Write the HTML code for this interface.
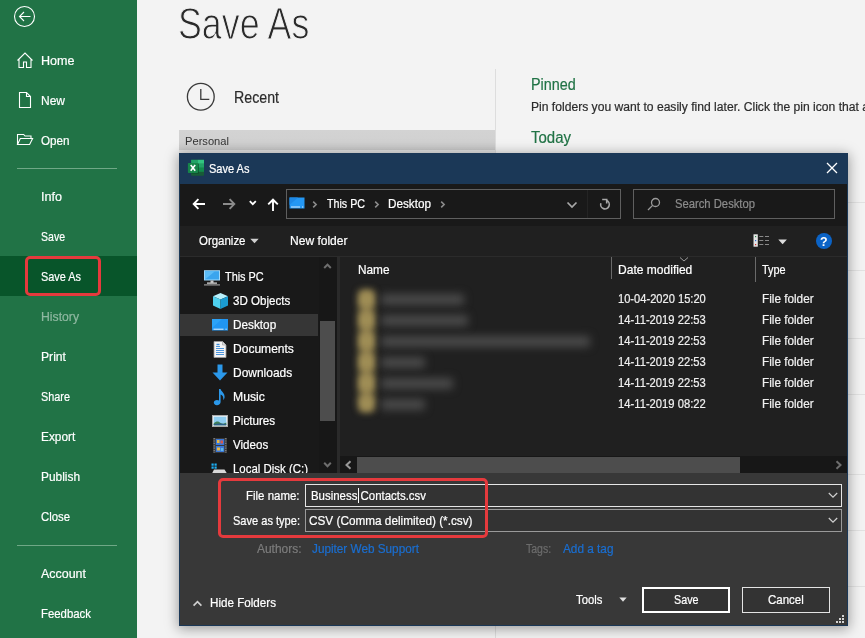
<!DOCTYPE html>
<html><head><meta charset="utf-8"><title>Save As</title>
<style>
*{box-sizing:border-box;margin:0;padding:0}
html,body{width:865px;height:638px;overflow:hidden;background:#f3f3f3;font-family:"Liberation Sans",sans-serif;}
.a{position:absolute}
.t{position:absolute;white-space:nowrap;transform-origin:0 50%}
#side{position:absolute;left:0;top:0;width:137px;height:638px;background:#217346;color:#fff}
.hr{position:absolute;left:17px;width:100px;height:1px;background:#6fa886}
.redbox{position:absolute;border:3px solid #e53a3d;border-radius:5px}
#dlg{position:absolute;left:179px;top:153px;width:669px;height:473px;background:#1b3857;color:#fff;box-shadow:0 2px 12px 1px rgba(0,0,0,.36)}
.bl{position:absolute;filter:blur(3px);border-radius:3px}
</style></head><body>

<div class="a" style="left:179px;top:130px;width:316px;height:23px;background:linear-gradient(#d3d3d3 0,#d1d1d1 50%,#c9c9c9 86.9%,#e3e3e3 87%,#e3e3e3 100%)"></div>
<div class="a" style="left:495px;top:69px;width:1px;height:569px;background:#dddddd"></div>
<div class="a" style="left:531px;top:202px;width:334px;height:1px;background:#e2e2e2"></div>
<div class="a" style="left:531px;top:270px;width:334px;height:1px;background:#e2e2e2"></div>
<div class="a" style="left:531px;top:338px;width:334px;height:1px;background:#e2e2e2"></div>
<div class="a" style="left:531px;top:394px;width:334px;height:1px;background:#e2e2e2"></div>
<div class="a" style="left:531px;top:474px;width:334px;height:1px;background:#e2e2e2"></div>
<div class="a" style="left:531px;top:530px;width:334px;height:1px;background:#e2e2e2"></div>
<div class="a" style="left:531px;top:586px;width:334px;height:1px;background:#e2e2e2"></div>
<div class="t" style="left:177.6px;top:-1.64px;font-size:43.5px;line-height:52.2px;color:#2a2a2a;transform:scaleX(0.8226);-webkit-text-stroke:1.05px #f3f3f3;">Save As</div>
<svg class="a" style="left:185px;top:81px" width="32" height="32" viewBox="0 0 32 32"><circle cx="15.800" cy="15.800" r="13.400" fill="none" stroke="#3a3a3a" stroke-width="1.300"/><path d="M15.800 8.100v10.200h8.500" fill="none" stroke="#3a3a3a" stroke-width="1.300"/></svg>
<div class="t" style="left:234.0px;top:87.88px;font-size:16.5px;line-height:19.8px;color:#2b2b2b;transform:scaleX(0.8607);-webkit-text-stroke:0.2px #2b2b2b;">Recent</div>
<div class="t" style="left:185.0px;top:133.86px;font-size:11.8px;line-height:14.16px;color:#333;transform:scaleX(0.9450);">Personal</div>
<div class="t" style="left:531.0px;top:75.74px;font-size:15.8px;line-height:18.96px;color:#217346;transform:scaleX(0.9105);-webkit-text-stroke:0.2px #217346;">Pinned</div>
<div class="t" style="left:531.0px;top:99.53px;font-size:12.3px;line-height:14.76px;color:#2b2b2b;transform:scaleX(0.9849);-webkit-text-stroke:0.2px #2b2b2b;">Pin folders you want to easily find later. Click the pin icon that appears</div>
<div class="t" style="left:531.0px;top:129.14px;font-size:15.8px;line-height:18.96px;color:#217346;transform:scaleX(0.9489);-webkit-text-stroke:0.2px #217346;">Today</div>
<div id="side">
<svg class="a" style="left:12px;top:4px" width="25" height="25" viewBox="0 0 25 25"><circle cx="12.5" cy="12.5" r="10" fill="none" stroke="#fff" stroke-width="1.1"/><path d="M18.5 12.5h-11M12 8l-4.5 4.5L12 17" fill="none" stroke="#fff" stroke-width="1.1"/></svg>
<svg class="a" style="left:16px;top:51px" width="18" height="18" viewBox="0 0 18 18"><path d="M1.500 9.500L9 2l7.500 7.500M3 8.500V16.500h4.500v-5.500h3v5.500H15V8.500" fill="none" stroke="#fff" stroke-width="1.1"/></svg>
<svg class="a" style="left:17px;top:91px" width="16" height="18" viewBox="0 0 16 18"><path d="M2.500 1.500h7l4 4v11h-11zM9.500 1.500v4h4" fill="none" stroke="#fff" stroke-width="1.1"/></svg>
<svg class="a" style="left:15px;top:131px" width="20" height="16" viewBox="0 0 20 16"><path d="M2.500 13.500V3.500h6.200l1.300 1.500h6v2.500M2.500 13.500l2.800-6H17.600l-3 6z" fill="none" stroke="#fff" stroke-width="1.1"/></svg>
<div class="hr" style="top:168px"></div>
<div class="a" style="left:0;top:256px;width:137px;height:40px;background:#08552a"></div>
<div class="redbox" style="left:24.500px;top:255.500px;width:76.500px;height:40.500px"></div>
<div class="hr" style="top:545px"></div>
<div class="t" style="left:41.0px;top:53.40px;font-size:12.8px;line-height:15.36px;color:#fff;transform:scaleX(0.9812);-webkit-text-stroke:0.2px #fff;">Home</div>
<div class="t" style="left:41.0px;top:93.40px;font-size:12.8px;line-height:15.36px;color:#fff;transform:scaleX(0.9372);-webkit-text-stroke:0.2px #fff;">New</div>
<div class="t" style="left:41.0px;top:133.40px;font-size:12.8px;line-height:15.36px;color:#fff;transform:scaleX(0.9134);-webkit-text-stroke:0.2px #fff;">Open</div>
<div class="t" style="left:41.0px;top:189.40px;font-size:12.8px;line-height:15.36px;color:#fff;transform:scaleX(0.9832);-webkit-text-stroke:0.2px #fff;">Info</div>
<div class="t" style="left:41.0px;top:229.40px;font-size:12.8px;line-height:15.36px;color:#fff;transform:scaleX(0.8227);-webkit-text-stroke:0.2px #fff;">Save</div>
<div class="t" style="left:41.0px;top:269.40px;font-size:12.8px;line-height:15.36px;color:#fff;transform:scaleX(0.8519);-webkit-text-stroke:0.2px #fff;">Save As</div>
<div class="t" style="left:41.0px;top:309.40px;font-size:12.8px;line-height:15.36px;color:#8fb8a1;transform:scaleX(0.9541);-webkit-text-stroke:0.2px #8fb8a1;">History</div>
<div class="t" style="left:41.0px;top:349.40px;font-size:12.8px;line-height:15.36px;color:#fff;transform:scaleX(0.9501);-webkit-text-stroke:0.2px #fff;">Print</div>
<div class="t" style="left:41.0px;top:389.40px;font-size:12.8px;line-height:15.36px;color:#fff;transform:scaleX(0.8490);-webkit-text-stroke:0.2px #fff;">Share</div>
<div class="t" style="left:41.0px;top:429.40px;font-size:12.8px;line-height:15.36px;color:#fff;transform:scaleX(0.9270);-webkit-text-stroke:0.2px #fff;">Export</div>
<div class="t" style="left:41.0px;top:469.40px;font-size:12.8px;line-height:15.36px;color:#fff;transform:scaleX(0.9289);-webkit-text-stroke:0.2px #fff;">Publish</div>
<div class="t" style="left:41.0px;top:509.40px;font-size:12.8px;line-height:15.36px;color:#fff;transform:scaleX(0.8863);-webkit-text-stroke:0.2px #fff;">Close</div>
<div class="t" style="left:41.0px;top:566.40px;font-size:12.8px;line-height:15.36px;color:#fff;transform:scaleX(0.9730);-webkit-text-stroke:0.2px #fff;">Account</div>
<div class="t" style="left:41.0px;top:606.40px;font-size:12.8px;line-height:15.36px;color:#fff;transform:scaleX(0.8896);-webkit-text-stroke:0.2px #fff;">Feedback</div>
</div>
<div id="dlg"></div>
<div class="a" style="left:180px;top:184px;width:667px;height:42px;background:#191919;"></div>
<div class="a" style="left:180px;top:226px;width:667px;height:31px;background:#202020;"></div>
<div class="a" style="left:180px;top:256px;width:667px;height:1px;background:#2b2b2b;"></div>
<div class="a" style="left:180px;top:257px;width:158px;height:216px;background:#191919;"></div>
<div class="a" style="left:319px;top:257px;width:18px;height:216px;background:#171717;"></div>
<div class="a" style="left:338px;top:257px;width:509px;height:216px;background:#202020;"></div>
<div class="a" style="left:337px;top:257px;width:2.5px;height:216px;background:#2a2a2a;"></div>
<div class="a" style="left:180px;top:473px;width:667px;height:152px;background:#383838;"></div>
<svg class="a" style="left:187px;top:159px" width="18" height="18" viewBox="0 0 18 18"><rect x="4.100" y="0.800" width="12.900" height="15.900" rx="0.800" fill="#185c37"/><rect x="4.100" y="0.800" width="6.400" height="4" fill="#21a366"/><rect x="10.500" y="0.800" width="6.500" height="4" fill="#33c481"/><rect x="4.100" y="4.800" width="6.400" height="8" fill="#107c41"/><rect x="10.500" y="4.800" width="6.500" height="4" fill="#21a366"/><rect x="10.500" y="8.800" width="6.500" height="4" fill="#128a4c"/><rect x="10.700" y="4.600" width="1.200" height="10" fill="#0d4a28" opacity="0.700"/><rect x="4.700" y="13.800" width="6.500" height="0.900" fill="#0d4a28" opacity="0.600"/><rect x="0.900" y="4" width="10.100" height="9.900" rx="0.700" fill="#17864a"/><path d="M3.700 6.100l4.500 5.700M8.200 6.100l-4.500 5.700" stroke="#fff" stroke-width="1.600" fill="none"/></svg>
<div class="t" style="left:208.7px;top:160.90px;font-size:12.8px;line-height:15.36px;color:#fff;transform:scaleX(0.8626);-webkit-text-stroke:0.22px #fff;">Save As</div>
<svg class="a" style="left:826px;top:162px" width="12" height="12" viewBox="0 0 12 12"><path d="M1 1l10 10M11 1L1 11" stroke="#fff" stroke-width="1.300" fill="none"/></svg>
<svg class="a" style="left:191px;top:196px" width="16" height="16" viewBox="0 0 16 16"><path d="M14 8H3.200M7.400 3.200L2.700 8l4.700 4.800" stroke="#fff" stroke-width="1.900" fill="none"/></svg>
<svg class="a" style="left:221px;top:196px" width="16" height="16" viewBox="0 0 16 16"><path d="M2 8h10.800M8.600 3.200L13.300 8l-4.700 4.800" stroke="#8c8c8c" stroke-width="1.900" fill="none"/></svg>
<svg class="a" style="left:248px;top:199px" width="10" height="8" viewBox="0 0 10 8"><path d="M1.800 2.200l3 3 3-3" stroke="#fff" stroke-width="1.800" fill="none"/></svg>
<svg class="a" style="left:265px;top:197px" width="16" height="16" viewBox="0 0 16 16"><path d="M8 14V3.200M3.200 7.400L8 2.700l4.800 4.700" stroke="#fff" stroke-width="1.900" fill="none"/></svg>
<div class="a" style="left:286px;top:189px;width:335px;height:30px;border:1px solid #5f5f5f"></div>
<div class="a" style="left:587px;top:190px;width:1px;height:28px;background:#242424;"></div>
<svg class="a" style="left:289px;top:197px" width="16" height="12" viewBox="0 0 16 12"><rect x="0.500" y="0.500" width="15" height="11" fill="#2497f3"/><path d="M0.500 8L9 0.500H0.500z" fill="#1e88e5"/><rect x="2" y="9.500" width="9" height="1" fill="#d8ecfb"/><rect x="13" y="9.500" width="1.200" height="1" fill="#d8ecfb"/></svg>
<svg class="a" style="left:311.5px;top:199.5px" width="6" height="9" viewBox="0 0 6 9"><path d="M1.200 1.700l2.900 2.800L1.200 7.300" stroke="#8c8c8c" stroke-width="1.600" fill="none"/></svg>
<div class="t" style="left:326.5px;top:196.40px;font-size:12.8px;line-height:15.36px;color:#fff;transform:scaleX(0.8349);-webkit-text-stroke:0.22px #fff;">This PC</div>
<svg class="a" style="left:373.5px;top:199.5px" width="6" height="9" viewBox="0 0 6 9"><path d="M1.200 1.700l2.900 2.800L1.200 7.300" stroke="#8c8c8c" stroke-width="1.600" fill="none"/></svg>
<div class="t" style="left:388.0px;top:196.40px;font-size:12.8px;line-height:15.36px;color:#fff;transform:scaleX(0.9158);-webkit-text-stroke:0.22px #fff;">Desktop</div>
<svg class="a" style="left:439.5px;top:199.5px" width="6" height="9" viewBox="0 0 6 9"><path d="M1.200 1.700l2.900 2.800L1.200 7.300" stroke="#8c8c8c" stroke-width="1.600" fill="none"/></svg>
<svg class="a" style="left:566px;top:201px" width="12" height="8" viewBox="0 0 12 8"><path d="M1.500 1.500L6 6l4.500-4.500" stroke="#a8a8a8" stroke-width="1.700" fill="none"/></svg>
<svg class="a" style="left:598px;top:198px" width="14" height="14" viewBox="0 0 14 14"><path d="M8.600 2.600A4.300 4.300 0 1 1 2.900 5.200" stroke="#a8a8a8" stroke-width="1.600" fill="none"/><path d="M4.200 1.500H8.700V5.600" stroke="#a8a8a8" stroke-width="1.600" fill="none"/></svg>
<div class="a" style="left:633px;top:189px;width:202px;height:30px;border:1px solid #5f5f5f"></div>
<svg class="a" style="left:647px;top:197px" width="14" height="14" viewBox="0 0 14 14"><circle cx="8.500" cy="5.500" r="4" stroke="#9a9a9a" stroke-width="1.300" fill="none"/><path d="M5.600 8.400L1 13" stroke="#9a9a9a" stroke-width="1.300"/></svg>
<div class="t" style="left:674.5px;top:196.40px;font-size:12.8px;line-height:15.36px;color:#8c8c8c;transform:scaleX(0.8787);-webkit-text-stroke:0.22px #8c8c8c;">Search Desktop</div>
<div class="t" style="left:198.5px;top:233.40px;font-size:12.8px;line-height:15.36px;color:#fff;transform:scaleX(0.8953);-webkit-text-stroke:0.22px #fff;">Organize</div>
<svg class="a" style="left:250px;top:238px" width="9" height="6" viewBox="0 0 9 6"><path d="M0.300 0.700h8.400L4.500 5.300z" fill="#d0d0d0"/></svg>
<div class="t" style="left:289.5px;top:233.40px;font-size:12.8px;line-height:15.36px;color:#fff;transform:scaleX(0.9400);-webkit-text-stroke:0.22px #fff;">New folder</div>
<svg class="a" style="left:753px;top:234px" width="17" height="13" viewBox="0 0 17 13"><rect x="0.500" y="0.300" width="4.300" height="12.400" fill="#e4e4e4"/><rect x="2" y="2" width="1.200" height="1.200" fill="#2a8a4a"/><rect x="2" y="6" width="1.200" height="1.200" fill="#2a6ad8"/><rect x="2" y="10" width="1.200" height="1.200" fill="#d83030"/><path d="M6.300 2.500h4M12 2.500h4M6.300 6.500h4M12 6.500h4M6.300 10.500h4M12 10.500h4" stroke="#8a8a8a" stroke-width="1"/></svg>
<svg class="a" style="left:778px;top:238.500px" width="10" height="6" viewBox="0 0 10 6"><path d="M0.300 0.500h8.600L4.600 5.300z" fill="#dcdcdc"/></svg>
<div class="a" style="left:816.200px;top:233.200px;width:15.600px;height:15.600px;border-radius:8px;background:#0b63c6"></div>
<div class="t" style="left:820.2px;top:233.84px;font-size:13.5px;line-height:16.2px;color:#fff;transform:scaleX(0.9212);font-weight:bold;">?</div>
<div class="a" style="left:180px;top:314px;width:138px;height:22px;background:#363636;"></div>
<div class="a" style="left:320px;top:321px;width:15px;height:100px;background:#4d4d4d;"></div>
<svg class="a" style="left:323px;top:262px" width="9" height="8" viewBox="0 0 9 8"><path d="M1.200 6l3.300-3.400L7.800 6" stroke="#6e6e6e" stroke-width="2" fill="none"/></svg>
<svg class="a" style="left:323px;top:461px" width="9" height="8" viewBox="0 0 9 8"><path d="M1.200 1.800l3.300 3.400 3.300-3.400" stroke="#6e6e6e" stroke-width="2" fill="none"/></svg>
<div class="t" style="left:225.0px;top:269.40px;font-size:12.8px;line-height:15.36px;color:#fff;transform:scaleX(0.8503);-webkit-text-stroke:0.22px #fff;">This PC</div>
<div class="t" style="left:232.8px;top:293.40px;font-size:12.8px;line-height:15.36px;color:#fff;transform:scaleX(0.9035);-webkit-text-stroke:0.22px #fff;">3D Objects</div>
<div class="t" style="left:232.8px;top:317.40px;font-size:12.8px;line-height:15.36px;color:#fff;transform:scaleX(0.9201);-webkit-text-stroke:0.22px #fff;">Desktop</div>
<div class="t" style="left:232.8px;top:341.40px;font-size:12.8px;line-height:15.36px;color:#fff;transform:scaleX(0.9408);-webkit-text-stroke:0.22px #fff;">Documents</div>
<div class="t" style="left:232.8px;top:365.40px;font-size:12.8px;line-height:15.36px;color:#fff;transform:scaleX(0.9350);-webkit-text-stroke:0.22px #fff;">Downloads</div>
<div class="t" style="left:232.8px;top:389.40px;font-size:12.8px;line-height:15.36px;color:#fff;transform:scaleX(0.9515);-webkit-text-stroke:0.22px #fff;">Music</div>
<div class="t" style="left:232.8px;top:413.40px;font-size:12.8px;line-height:15.36px;color:#fff;transform:scaleX(0.9127);-webkit-text-stroke:0.22px #fff;">Pictures</div>
<div class="t" style="left:232.8px;top:437.40px;font-size:12.8px;line-height:15.36px;color:#fff;transform:scaleX(0.9047);-webkit-text-stroke:0.22px #fff;">Videos</div>
<svg class="a" style="left:203px;top:269px" width="18" height="17" viewBox="0 0 18 17"><rect x="1" y="1.200" width="16" height="10.300" fill="#9fd8fb"/><rect x="2" y="2.200" width="14" height="8.300" fill="#3aa5ee"/><path d="M2 10.500L12 2.200H2z" fill="#5cbcf6"/><rect x="7.500" y="11.500" width="3" height="2.300" fill="#c8c8c8"/><rect x="4" y="13.500" width="10" height="1.200" fill="#e4e4e4"/><rect x="1" y="15.300" width="16" height="1.200" fill="#9a9a9a"/></svg>
<svg class="a" style="left:212px;top:292px" width="17" height="18" viewBox="0 0 17 18"><path d="M8.500 1L16 4.200 8.500 7.600 1 4.200z" fill="#b8f0fb"/><path d="M1 4.200L8.500 7.600V17L1 13.500z" fill="#4fd0ee"/><path d="M16 4.200L8.500 7.600V17L16 13.500z" fill="#1b9bd0"/></svg>
<svg class="a" style="left:212px;top:319px" width="16" height="12" viewBox="0 0 16 12"><rect x="0" y="0" width="16" height="11.500" fill="#2196f3"/><path d="M0 9L10 0H0z" fill="#2ba2f7"/><rect x="1.500" y="9.700" width="10" height="1" fill="#e0f0fc"/><rect x="13.500" y="9.700" width="1.200" height="1" fill="#e0f0fc"/></svg>
<svg class="a" style="left:213px;top:341px" width="14" height="17" viewBox="0 0 14 17"><path d="M1 0.500h8.500l3.500 3.500v12.500H1z" fill="#f4f4f4" stroke="#9a9a9a" stroke-width="0.800"/><path d="M9.500 0.500v3.500H13" fill="#dcdcdc" stroke="#9a9a9a" stroke-width="0.600"/><path d="M3 5.500h4M3 7.500h8M3 9.500h8M3 11.500h8M3 13.500h8" stroke="#3b8ad8" stroke-width="0.900"/><path d="M3.500 3.500h3" stroke="#3b8ad8" stroke-width="1.400"/></svg>
<svg class="a" style="left:212px;top:364px" width="16" height="17" viewBox="0 0 16 17"><path d="M5.500 0.500h5v8h5L8 16.500 0.500 8.500h5z" fill="#2b98ea"/></svg>
<svg class="a" style="left:213px;top:388px" width="13" height="18" viewBox="0 0 13 18"><path d="M6 1h1.600c0.400 2.500 4.400 3.800 4 8.500-0.200 1.200-0.800 2-1.500 2.500 0.800-2.600-0.400-5-2.500-5.600V14c0 1.800-1.700 3.200-3.700 3.200S0.800 16 0.800 14.600 2.300 12 4 12c0.800 0 1.500 0.200 2 0.500z" fill="#2b98ea"/></svg>
<svg class="a" style="left:212px;top:415px" width="16" height="12" viewBox="0 0 16 12"><rect x="0.400" y="0.400" width="15.200" height="11.200" fill="#f2f2f2" stroke="#b0b0b0" stroke-width="0.800"/><rect x="1.700" y="1.700" width="12.600" height="8.600" fill="#8fcdf0"/><path d="M1.700 8.500c3-3 5-2 7-0.500s3.500 0.500 5.600-0.500v2.800H1.700z" fill="#3f7f5a"/><path d="M1.700 9.300c4-1 8-1 12.600 0v1H1.700z" fill="#2d5f88"/></svg>
<svg class="a" style="left:213px;top:438px" width="14" height="15" viewBox="0 0 14 15"><rect x="0" y="0" width="14" height="15" fill="#3a3a3a"/><path d="M1.200 0v15M12.800 0v15" stroke="#8a8a8a" stroke-width="1.200" stroke-dasharray="1.200 1.200"/><rect x="2.800" y="1" width="8.400" height="6" fill="#3b78d8"/><rect x="2.800" y="8" width="8.400" height="6" fill="#3b78d8"/><rect x="4" y="2" width="2.500" height="3" fill="#e8b84a"/><rect x="7.500" y="2.500" width="2.500" height="3" fill="#d85a4a"/><rect x="4" y="9.500" width="3" height="3" fill="#e8b84a"/><rect x="7.800" y="10" width="2.500" height="3" fill="#62b8e8"/></svg>
<div class="a" style="left:179px;top:457px;width:140px;height:16px;overflow:hidden">
<svg class="a" style="left:32px;top:6px" width="17" height="14" viewBox="0 0 17 14"><g fill="#1cb0f6"><rect x="0.500" y="0.500" width="2.200" height="2.200"/><rect x="3.500" y="0.500" width="2.200" height="2.200"/><rect x="0.500" y="3.500" width="2.200" height="2.200"/><rect x="3.500" y="3.500" width="2.200" height="2.200"/></g><path d="M3 6.500h10.500l2.500 4v3H1v-3z" fill="#d8d8d8"/><rect x="1" y="10.500" width="15" height="3.500" fill="#f4f4f4"/></svg>
<div class="t" style="left:53.8px;top:4.40px;font-size:12.8px;line-height:15.36px;color:#fff;transform:scaleX(0.8939);-webkit-text-stroke:0.22px #fff;">Local Disk (C:)</div>
</div>
<div class="a" style="left:611px;top:257px;width:1px;height:22px;background:#6a6a6a;"></div>
<div class="a" style="left:755px;top:257px;width:1px;height:25px;background:#6a6a6a;"></div>
<div class="t" style="left:357.5px;top:262.10px;font-size:12.8px;line-height:15.36px;color:#fff;transform:scaleX(0.9227);-webkit-text-stroke:0.22px #fff;">Name</div>
<div class="t" style="left:618.2px;top:262.10px;font-size:12.8px;line-height:15.36px;color:#fff;transform:scaleX(0.9409);-webkit-text-stroke:0.22px #fff;">Date modified</div>
<div class="t" style="left:762.4px;top:262.10px;font-size:12.8px;line-height:15.36px;color:#fff;transform:scaleX(0.8505);-webkit-text-stroke:0.22px #fff;">Type</div>
<svg class="a" style="left:679px;top:257px" width="10" height="5" viewBox="0 0 10 5"><path d="M1 0.500l4 3.500 4-3.500" stroke="#9a9a9a" stroke-width="1" fill="none"/></svg>
<div class="bl" style="left:360px;top:291px;width:13px;height:117px;background:#96854f;filter:blur(4px)"></div>
<div class="t" style="left:618.2px;top:291.40px;font-size:12.8px;line-height:15.36px;color:#f0f0f0;transform:scaleX(0.8689);-webkit-text-stroke:0.22px #f0f0f0;">10-04-2020 15:20</div>
<div class="t" style="left:762.4px;top:291.40px;font-size:12.8px;line-height:15.36px;color:#f0f0f0;transform:scaleX(0.9184);-webkit-text-stroke:0.22px #f0f0f0;">File folder</div>
<div class="bl" style="left:359px;top:291px;width:15px;height:16px;background:#a08e56;filter:blur(3.5px)"></div>
<div class="bl" style="left:381px;top:293.5px;width:83px;height:11px;background:#4a4a4a;filter:blur(4px)"></div>
<div class="t" style="left:618.2px;top:312.40px;font-size:12.8px;line-height:15.36px;color:#f0f0f0;transform:scaleX(0.8772);-webkit-text-stroke:0.22px #f0f0f0;">14-11-2019 22:53</div>
<div class="t" style="left:762.4px;top:312.40px;font-size:12.8px;line-height:15.36px;color:#f0f0f0;transform:scaleX(0.9184);-webkit-text-stroke:0.22px #f0f0f0;">File folder</div>
<div class="bl" style="left:359px;top:312px;width:15px;height:16px;background:#a08e56;filter:blur(3.5px)"></div>
<div class="bl" style="left:381px;top:314.5px;width:87px;height:11px;background:#4a4a4a;filter:blur(4px)"></div>
<div class="t" style="left:618.2px;top:333.40px;font-size:12.8px;line-height:15.36px;color:#f0f0f0;transform:scaleX(0.8772);-webkit-text-stroke:0.22px #f0f0f0;">14-11-2019 22:53</div>
<div class="t" style="left:762.4px;top:333.40px;font-size:12.8px;line-height:15.36px;color:#f0f0f0;transform:scaleX(0.9184);-webkit-text-stroke:0.22px #f0f0f0;">File folder</div>
<div class="bl" style="left:359px;top:333px;width:15px;height:16px;background:#a08e56;filter:blur(3.5px)"></div>
<div class="bl" style="left:381px;top:335.5px;width:209px;height:11px;background:#4a4a4a;filter:blur(4px)"></div>
<div class="t" style="left:618.2px;top:354.40px;font-size:12.8px;line-height:15.36px;color:#f0f0f0;transform:scaleX(0.8772);-webkit-text-stroke:0.22px #f0f0f0;">14-11-2019 22:53</div>
<div class="t" style="left:762.4px;top:354.40px;font-size:12.8px;line-height:15.36px;color:#f0f0f0;transform:scaleX(0.9184);-webkit-text-stroke:0.22px #f0f0f0;">File folder</div>
<div class="bl" style="left:359px;top:354px;width:15px;height:16px;background:#a08e56;filter:blur(3.5px)"></div>
<div class="bl" style="left:381px;top:356.5px;width:44px;height:11px;background:#4a4a4a;filter:blur(4px)"></div>
<div class="t" style="left:618.2px;top:375.40px;font-size:12.8px;line-height:15.36px;color:#f0f0f0;transform:scaleX(0.8772);-webkit-text-stroke:0.22px #f0f0f0;">14-11-2019 22:53</div>
<div class="t" style="left:762.4px;top:375.40px;font-size:12.8px;line-height:15.36px;color:#f0f0f0;transform:scaleX(0.9184);-webkit-text-stroke:0.22px #f0f0f0;">File folder</div>
<div class="bl" style="left:359px;top:375px;width:15px;height:16px;background:#a08e56;filter:blur(3.5px)"></div>
<div class="bl" style="left:381px;top:377.5px;width:72px;height:11px;background:#4a4a4a;filter:blur(4px)"></div>
<div class="t" style="left:618.2px;top:396.40px;font-size:12.8px;line-height:15.36px;color:#f0f0f0;transform:scaleX(0.8772);-webkit-text-stroke:0.22px #f0f0f0;">14-11-2019 08:22</div>
<div class="t" style="left:762.4px;top:396.40px;font-size:12.8px;line-height:15.36px;color:#f0f0f0;transform:scaleX(0.9184);-webkit-text-stroke:0.22px #f0f0f0;">File folder</div>
<div class="bl" style="left:359px;top:396px;width:15px;height:16px;background:#a08e56;filter:blur(3.5px)"></div>
<div class="bl" style="left:381px;top:398.5px;width:44px;height:11px;background:#4a4a4a;filter:blur(4px)"></div>
<div class="a" style="left:340px;top:456px;width:507px;height:17px;background:#171717;"></div>
<div class="a" style="left:357px;top:457px;width:383px;height:15.5px;background:#4d4d4d;"></div>
<svg class="a" style="left:344px;top:460px" width="8" height="10" viewBox="0 0 8 10"><path d="M6.500 1.300L2.500 5l4 3.700" stroke="#9a9a9a" stroke-width="2" fill="none"/></svg>
<svg class="a" style="left:835px;top:460px" width="8" height="10" viewBox="0 0 8 10"><path d="M1.500 1.300L5.500 5 1.500 8.700" stroke="#6e6e6e" stroke-width="2" fill="none"/></svg>
<div class="a" style="left:305px;top:484px;width:537px;height:23px;border:1px solid #e6e6e6;background:#333"></div>
<div class="a" style="left:305px;top:509px;width:537px;height:23px;border:1px solid #9a9a9a;background:#333"></div>
<div class="t" style="left:246.0px;top:487.90px;font-size:12.8px;line-height:15.36px;color:#fff;transform:scaleX(0.8954);-webkit-text-stroke:0.22px #fff;">File name:</div>
<div class="t" style="left:232.5px;top:513.40px;font-size:12.8px;line-height:15.36px;color:#fff;transform:scaleX(0.8640);-webkit-text-stroke:0.22px #fff;">Save as type:</div>
<div class="t" style="left:311.0px;top:487.90px;font-size:12.8px;line-height:15.36px;color:#fff;transform:scaleX(0.8933);-webkit-text-stroke:0.22px #fff;">Business Contacts.csv</div>
<div class="a" style="left:358px;top:488px;width:1px;height:15px;background:#fff;"></div>
<div class="t" style="left:309.2px;top:513.40px;font-size:12.8px;line-height:15.36px;color:#fff;transform:scaleX(0.9198);-webkit-text-stroke:0.22px #fff;">CSV (Comma delimited) (*.csv)</div>
<svg class="a" style="left:828px;top:492px" width="10" height="7" viewBox="0 0 10 7"><path d="M0.800 1l4.200 4.200L9.200 1" stroke="#d0d0d0" stroke-width="1.200" fill="none"/></svg>
<svg class="a" style="left:828px;top:517px" width="10" height="7" viewBox="0 0 10 7"><path d="M0.800 1l4.200 4.200L9.200 1" stroke="#d0d0d0" stroke-width="1.200" fill="none"/></svg>
<div class="redbox" style="left:218px;top:478px;width:270px;height:60px"></div>
<div class="t" style="left:257.0px;top:540.90px;font-size:12.8px;line-height:15.36px;color:#7c7c7c;transform:scaleX(0.9335);-webkit-text-stroke:0.22px #7c7c7c;">Authors:</div>
<div class="t" style="left:312.4px;top:540.90px;font-size:12.8px;line-height:15.36px;color:#1a6ed0;transform:scaleX(0.9182);-webkit-text-stroke:0.22px #1a6ed0;">Jupiter Web Support</div>
<div class="t" style="left:526.3px;top:540.90px;font-size:12.8px;line-height:15.36px;color:#6c6c6c;transform:scaleX(0.8204);-webkit-text-stroke:0.22px #6c6c6c;">Tags:</div>
<div class="t" style="left:562.8px;top:540.90px;font-size:12.8px;line-height:15.36px;color:#1a6ed0;transform:scaleX(0.9216);-webkit-text-stroke:0.22px #1a6ed0;">Add a tag</div>
<svg class="a" style="left:192px;top:598.500px" width="11" height="8" viewBox="0 0 11 8"><path d="M1.600 6.600L5.500 2.600l3.900 4" stroke="#cfcfcf" stroke-width="1.700" fill="none"/></svg>
<div class="t" style="left:210.0px;top:595.10px;font-size:12.8px;line-height:15.36px;color:#fff;transform:scaleX(0.9098);-webkit-text-stroke:0.22px #fff;">Hide Folders</div>
<div class="t" style="left:575.7px;top:592.40px;font-size:12.8px;line-height:15.36px;color:#fff;transform:scaleX(0.8803);-webkit-text-stroke:0.22px #fff;">Tools</div>
<svg class="a" style="left:619px;top:597px" width="8" height="5" viewBox="0 0 8 5"><path d="M0.300 0.500h7.400L4 4.700z" fill="#e0e0e0"/></svg>
<div class="a" style="left:642px;top:587px;width:88px;height:26px;border:2px solid #fff;background:#333"></div>
<div class="a" style="left:742px;top:587px;width:88px;height:26px;border:1.500px solid #e4e4e4;background:#333"></div>
<div class="t" style="left:674.0px;top:592.40px;font-size:12.8px;line-height:15.36px;color:#fff;transform:scaleX(0.8399);-webkit-text-stroke:0.22px #fff;">Save</div>
<div class="t" style="left:768.3px;top:592.40px;font-size:12.8px;line-height:15.36px;color:#fff;transform:scaleX(0.8960);-webkit-text-stroke:0.22px #fff;">Cancel</div>
<svg class="a" style="left:835px;top:614px" width="10" height="10" viewBox="0 0 10 10"><g fill="#d4d4d4"><rect x="7" y="1" width="2" height="2"/><rect x="4" y="4" width="2" height="2"/><rect x="7" y="4" width="2" height="2"/><rect x="1" y="7" width="2" height="2"/><rect x="4" y="7" width="2" height="2"/><rect x="7" y="7" width="2" height="2"/></g></svg>
</body></html>
